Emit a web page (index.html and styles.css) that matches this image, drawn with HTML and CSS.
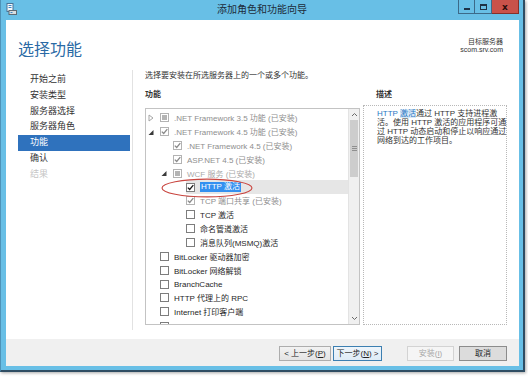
FILE: index.html
```html
<!DOCTYPE html>
<html lang="zh-CN">
<head>
<meta charset="utf-8">
<title>添加角色和功能向导</title>
<link rel="stylesheet" href="styles.css">
</head>
<body>
<div class="window">
  <div class="titlebar">
    <div class="tb-left">
      <svg class="app-icon" width="11" height="12" viewBox="0 0 11 12">
        <rect x="1" y="0.5" width="6" height="8" fill="#f4f8fb" stroke="#4a7396" stroke-width="1"/>
        <line x1="2.5" y1="2.5" x2="5.5" y2="2.5" stroke="#3a86c6" stroke-width="1"/>
        <line x1="2.5" y1="4.5" x2="5.5" y2="4.5" stroke="#3a86c6" stroke-width="1"/>
        <rect x="3" y="7.5" width="7.5" height="4" fill="#d9dde0" stroke="#5d6a74" stroke-width="1"/>
        <rect x="4.5" y="9" width="2" height="1" fill="#3a86c6"/>
      </svg>
    </div>
    <div class="title">添加角色和功能向导</div>
    <div class="tb-right">
      <div class="wbtn min"><span class="min-glyph"></span></div>
      <div class="wbtn max"><span class="max-glyph"></span></div>
      <div class="wbtn close">x</div>
    </div>
  </div>

  <div class="client">
    <div class="header">
      <h1 class="heading">选择功能</h1>
      <div class="target">
        <div>目标服务器</div>
        <div>scom.srv.com</div>
      </div>
    </div>

    <div class="body">
      <ul class="nav">
        <li class="nav-item">开始之前</li>
        <li class="nav-item">安装类型</li>
        <li class="nav-item">服务器选择</li>
        <li class="nav-item">服务器角色</li>
        <li class="nav-item active">功能</li>
        <li class="nav-item">确认</li>
        <li class="nav-item dim">结果</li>
      </ul>
      <div class="separator"></div>

      <div class="main">
        <p class="intro">选择要安装在所选服务器上的一个或多个功能。</p>
        <div class="panes">
          <div class="pane-left">
            <div class="label">功能</div>
            <div class="listbox">
              <div class="rows">
                <div class="row l0 dis">
                  <span class="exp"><svg width="6" height="8" viewBox="0 0 6 8"><polygon points="1,1 5,4 1,7" fill="none" stroke="#a6a6a6" stroke-width="1"/></svg></span>
                  <span class="cb ind"></span><span class="txt">.NET Framework 3.5 功能 (已安装)</span>
                </div>
                <div class="row l0 dis">
                  <span class="exp"><svg width="6" height="8" viewBox="0 0 6 8"><polygon points="5.5,2 5.5,7 0.5,7" fill="#3a3a3a"/></svg></span>
                  <span class="cb chk"><svg width="7" height="7" viewBox="0 0 7 7"><path d="M0.8 3.6 L2.7 5.5 L6.3 1.2" fill="none" stroke="#8a8a8a" stroke-width="1.3"/></svg></span><span class="txt">.NET Framework 4.5 功能 (已安装)</span>
                </div>
                <div class="row l1 dis">
                  <span class="exp"></span>
                  <span class="cb chk"><svg width="7" height="7" viewBox="0 0 7 7"><path d="M0.8 3.6 L2.7 5.5 L6.3 1.2" fill="none" stroke="#8a8a8a" stroke-width="1.3"/></svg></span><span class="txt">.NET Framework 4.5 (已安装)</span>
                </div>
                <div class="row l1 dis">
                  <span class="exp"></span>
                  <span class="cb chk"><svg width="7" height="7" viewBox="0 0 7 7"><path d="M0.8 3.6 L2.7 5.5 L6.3 1.2" fill="none" stroke="#8a8a8a" stroke-width="1.3"/></svg></span><span class="txt">ASP.NET 4.5 (已安装)</span>
                </div>
                <div class="row l1 dis faint">
                  <span class="exp"><svg width="6" height="8" viewBox="0 0 6 8"><polygon points="5.5,2 5.5,7 0.5,7" fill="#3a3a3a"/></svg></span>
                  <span class="cb ind"></span><span class="txt">WCF 服务 (已安装)</span>
                </div>
                <div class="row l2 sel">
                  <span class="exp"></span>
                  <span class="hl">
                    <span class="cb chk on"><svg width="7" height="7" viewBox="0 0 7 7"><path d="M0.8 3.6 L2.7 5.5 L6.3 1.2" fill="none" stroke="#1a1a1a" stroke-width="1.3"/></svg></span><span class="txt seltext">HTTP 激活</span>
                  </span>
                </div>
                <div class="row l2 dis">
                  <span class="exp"></span>
                  <span class="cb chk"><svg width="7" height="7" viewBox="0 0 7 7"><path d="M0.8 3.6 L2.7 5.5 L6.3 1.2" fill="none" stroke="#8a8a8a" stroke-width="1.3"/></svg></span><span class="txt">TCP 端口共享 (已安装)</span>
                </div>
                <div class="row l2">
                  <span class="exp"></span>
                  <span class="cb"></span><span class="txt">TCP 激活</span>
                </div>
                <div class="row l2">
                  <span class="exp"></span>
                  <span class="cb"></span><span class="txt">命名管道激活</span>
                </div>
                <div class="row l2">
                  <span class="exp"></span>
                  <span class="cb"></span><span class="txt">消息队列(MSMQ)激活</span>
                </div>
                <div class="row l0">
                  <span class="exp"></span>
                  <span class="cb"></span><span class="txt">BitLocker 驱动器加密</span>
                </div>
                <div class="row l0">
                  <span class="exp"></span>
                  <span class="cb"></span><span class="txt">BitLocker 网络解锁</span>
                </div>
                <div class="row l0">
                  <span class="exp"></span>
                  <span class="cb"></span><span class="txt">BranchCache</span>
                </div>
                <div class="row l0">
                  <span class="exp"></span>
                  <span class="cb"></span><span class="txt">HTTP 代理上的 RPC</span>
                </div>
                <div class="row l0">
                  <span class="exp"></span>
                  <span class="cb"></span><span class="txt">Internet 打印客户端</span>
                </div>
                <div class="row l0 cut">
                  <span class="exp"></span>
                  <span class="cb"></span>
                </div>
              </div>
              <div class="scroll">
                <div class="sb-btn"><svg width="7" height="5" viewBox="0 0 7 5"><path d="M1 4 L3.5 1.5 L6 4" fill="none" stroke="#6a6a6a" stroke-width="1"/></svg></div>
                <div class="sb-thumb"><span class="grip"></span></div>
                <div class="sb-track"></div>
                <div class="sb-btn"><svg width="7" height="5" viewBox="0 0 7 5"><path d="M1 1 L3.5 3.5 L6 1" fill="none" stroke="#6a6a6a" stroke-width="1"/></svg></div>
              </div>
              <svg class="mark" width="92" height="20" viewBox="0 0 92 20">
                <ellipse cx="46" cy="10" rx="45" ry="8.9" fill="none" stroke="#c9453f" stroke-width="1.1"/>
              </svg>
            </div>
          </div>
          <div class="pane-right">
            <div class="label desc-label">描述</div>
            <div class="descbox">
              <span class="link">HTTP <span class="linkhl">激活</span></span>通过 HTTP 支持进程激<br>活。使用 HTTP 激活的应用程序可通<br>过 HTTP 动态启动和停止以响应通过<br>网络到达的工作项目。
            </div>
          </div>
        </div>
      </div>
    </div>

    <div class="footer">
      <button class="btn prev">&lt; 上一步(<u>P</u>)</button>
      <button class="btn next">下一步(<u>N</u>) &gt;</button>
      <button class="btn install">安装(<u>I</u>)</button>
      <button class="btn cancel">取消</button>
    </div>
  </div>
</div>
</body>
</html>
```

FILE: styles.css
```css
* { box-sizing: border-box; margin: 0; padding: 0; }
html, body { width: 528px; height: 377px; overflow: hidden; background: #ffffff; }
body {
  font-family: "Liberation Sans", "Noto Sans CJK SC", sans-serif;
  font-size: 8px;
  color: #1e1e1e;
}

.window {
  width: 525px;
  height: 372px;
  background: #68bfe6;
  border-right: 2px solid #2f4d63;
  border-bottom: 2px solid #2f4d63;
  border-left: 1px solid #4e93b8;
  display: flex;
  flex-direction: column;
  box-shadow: 1px 1px 3px rgba(0, 0, 0, 0.35);
}

/* title bar */
.titlebar {
  height: 20px;
  flex: none;
  display: grid;
  grid-template-columns: 1fr auto 1fr;
}
.tb-left { padding: 3px 0 0 5px; }
.app-icon { display: block; }
.title {
  font-size: 10px;
  line-height: 20px;
  color: #1d2c3a;
}
.tb-right {
  justify-self: end;
  align-self: start;
  display: flex;
  height: 14px;
  margin-right: 4px;
}
.wbtn {
  height: 14px;
  border: 1px solid #3c6a89;
  border-top: none;
  display: flex;
  align-items: center;
  justify-content: center;
}
.wbtn.min { width: 16px; border-right: none; }
.wbtn.max { width: 18px; }
.wbtn.close {
  width: 27px;
  background: #c9524a;
  border-color: #86302a;
  border-left: none;
  color: #2a0c0a;
  font-family: "DejaVu Sans", sans-serif;
  font-weight: bold;
  font-size: 9px;
  line-height: 12px;
}
.min-glyph { width: 6px; height: 2px; background: #1d3347; margin-top: 4px; }
.max-glyph { width: 7px; height: 6px; border: 1px solid #1d3347; border-top-width: 2px; }

/* client area */
.client {
  flex: 1;
  margin: 0 4px 4px 5px;
  background: #ffffff;
  display: flex;
  flex-direction: column;
}

.header {
  height: 50px;
  flex: none;
  padding: 17.5px 16px 0 12px;
  display: flex;
  justify-content: space-between;
  align-items: flex-start;
}
.heading {
  font-size: 16px;
  line-height: 20px;
  font-weight: normal;
  color: #2a6aa5;
  font-family: "Noto Sans CJK SC", sans-serif;
}
.target {
  text-align: right;
  font-size: 7px;
  line-height: 8.5px;
  color: #333;
}

.body {
  height: 269px;
  flex: none;
  display: flex;
}

.nav {
  list-style: none;
  margin-left: 12px;
  width: 112px;
  padding-top: 2.1px;
  font-size: 9px;
}
.nav-item {
  height: 15.8px;
  line-height: 15.8px;
  padding-left: 12px;
  color: #333;
}
.nav-item.active { background: #2f72bd; color: #ffffff; }
.nav-item.dim { color: #c6c6c6; }

.separator {
  margin-left: 2px;
  width: 1px;
  height: 260px;
  background: #e2e2e2;
}

.main {
  margin-left: 12px;
  width: 362px;
  display: flex;
  flex-direction: column;
}
.intro {
  line-height: 12px;
  margin-bottom: 7px;
  color: #333;
}
.panes {
  height: 236px;
  display: flex;
  gap: 3px;
}
.label {
  line-height: 12px;
  font-weight: bold;
  color: #333;
}
.pane-left { width: 215px; display: flex; flex-direction: column; }
.pane-left .label { margin-bottom: 7px; }
.pane-right { width: 144px; display: flex; flex-direction: column; }
.desc-label { padding-left: 13px; margin-bottom: 4px; }

/* tree list */
.listbox {
  flex: 1;
  border: 1px solid #c3c3c3;
  display: flex;
  position: relative;
  overflow: hidden;
}
.rows {
  flex: 1;
  padding-top: 2px;
  overflow: hidden;
}
.row {
  height: 13.85px;
  display: flex;
  align-items: center;
  white-space: nowrap;
  color: #262626;
}
.row.cut { align-items: flex-start; padding-top: 3px; }
.row.l1 { padding-left: 13px; }
.row.l2 { padding-left: 26px; }
.row.dis { color: #8e8e8e; }
.row.faint { color: #a9a9a9; }
.exp {
  width: 10px;
  margin-right: 4px;
  flex: none;
  display: flex;
  justify-content: center;
  align-items: center;
}
.exp svg { display: block; }
.cb {
  width: 9px;
  height: 9px;
  flex: none;
  margin-right: 5px;
  border: 1px solid #7d7d7d;
  background: #ffffff;
  display: flex;
  align-items: center;
  justify-content: center;
}
.cb svg { display: block; }
.row.dis .cb { border-color: #b3b3b3; }
.cb.ind::after {
  content: "";
  width: 5px;
  height: 5px;
  background: #b4b4b4;
}
.row.sel .hl {
  flex: 1;
  height: 100%;
  display: flex;
  align-items: center;
  background: #e6e6e6;
}
.seltext {
  background: #3390f0;
  color: #ffffff;
  padding: 0 1px;
  line-height: 10px;
}

.scroll {
  width: 11px;
  flex: none;
  background: #f0f0f0;
  border-left: 1px solid #e3e3e3;
  display: flex;
  flex-direction: column;
}
.sb-btn {
  height: 11px;
  display: flex;
  align-items: center;
  justify-content: center;
}
.sb-thumb {
  height: 57px;
  margin: 0 1px;
  background: #cdcdcd;
  display: flex;
  align-items: center;
  justify-content: center;
}
.grip {
  width: 5px;
  height: 5px;
  border-top: 1px solid #8f8f8f;
  border-bottom: 1px solid #8f8f8f;
  background: linear-gradient(#cdcdcd 1px, #8f8f8f 1px, #8f8f8f 2px, #cdcdcd 2px);
  background-size: 5px 3px;
  background-position: 0 0;
}
.sb-track { flex: 1; }

.mark {
  position: absolute;
  left: 15px;
  top: 68.5px;
}

/* description */
.descbox {
  flex: 1;
  border: 1px dotted #b8b8b8;
  padding: 2.7px 2px 0 13px;
  line-height: 9.2px;
  white-space: nowrap;
  color: #333;
}
.link { color: #2b78c4; }
.linkhl { background: #d9e9f7; }

/* footer */
.footer {
  height: 27px;
  flex: none;
  background: #f0f0f0;
  display: flex;
  justify-content: flex-end;
  align-items: flex-start;
  padding: 7px 12px 0 0;
}
.btn {
  height: 15px;
  font-family: inherit;
  font-size: 8px;
  line-height: 13px;
  border: 1px solid #adadad;
  background: linear-gradient(#f2f2f2, #e4e4e4);
  color: #222;
  text-align: center;
  padding: 0;
}
.btn u { text-decoration: underline; }
.btn.prev { width: 52px; margin-right: 2px; }
.btn.next { width: 49px; margin-right: 25px; border-color: #3c7fb1; background: linear-gradient(#eef5fb, #dfecf7); }
.btn.install { width: 47px; margin-right: 5px; color: #a8a8a8; border-color: #d3d3d3; background: #f5f5f5; }
.btn.cancel { width: 48px; border-color: #8c8c8c; background: #dcdcdc; }
```
